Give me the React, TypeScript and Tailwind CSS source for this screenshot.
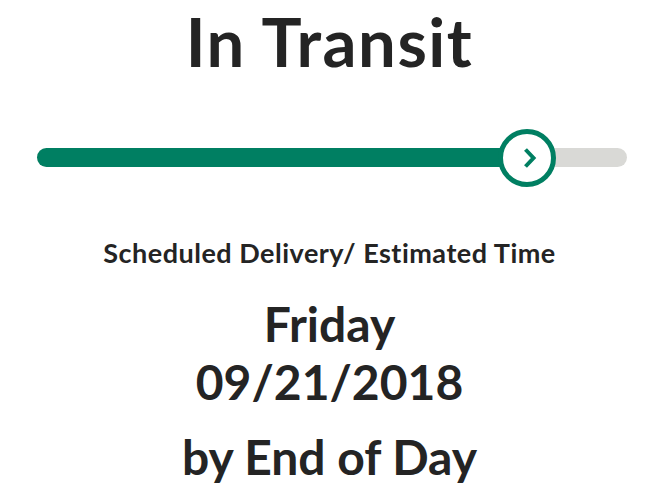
export default function App() {
  const progress = 83.2;

  return (
    <div className="flex h-[500px] w-full flex-col items-center bg-white text-[#242424] [font-family:Lato,'Open_Sans',sans-serif]">
      <h1 className="mt-px text-[67px] font-bold leading-[80px] tracking-[1.5px]">In Transit</h1>

      {/* progress track */}
      <div className="relative mt-[67px] ml-[4px] h-[19px] w-[590px] rounded-full bg-[#d9d9d6]">
        <div className="h-full rounded-full bg-[#007f62]" style={{ width: `${progress}%` }} />
        <div
          className="absolute top-1/2 flex h-[58px] w-[58px] -translate-x-1/2 -translate-y-1/2 items-center justify-center rounded-full border-[5px] border-[#007f62] bg-white"
          style={{ left: `${progress}%` }}
        >
          <svg width="14" height="22" viewBox="0 0 14 22" className="ml-[5px]" fill="none">
            <path d="M2.5 2.5 L10.5 11 L2.5 19.5" stroke="#007f62" strokeWidth="4" strokeLinejoin="miter" />
          </svg>
        </div>
      </div>

      <p className="mt-[70px] text-[27px] font-bold leading-[32px] tracking-[0.5px]">Scheduled Delivery/ Estimated Time</p>
      <p className="mt-[26px] text-[48px] font-bold leading-[58px]">Friday</p>
      <p className="text-[48px] font-bold leading-[58px]">09/21/2018</p>
      <p className="mt-[17px] text-[48px] font-bold leading-[58px]">by End of Day</p>
    </div>
  );
}
